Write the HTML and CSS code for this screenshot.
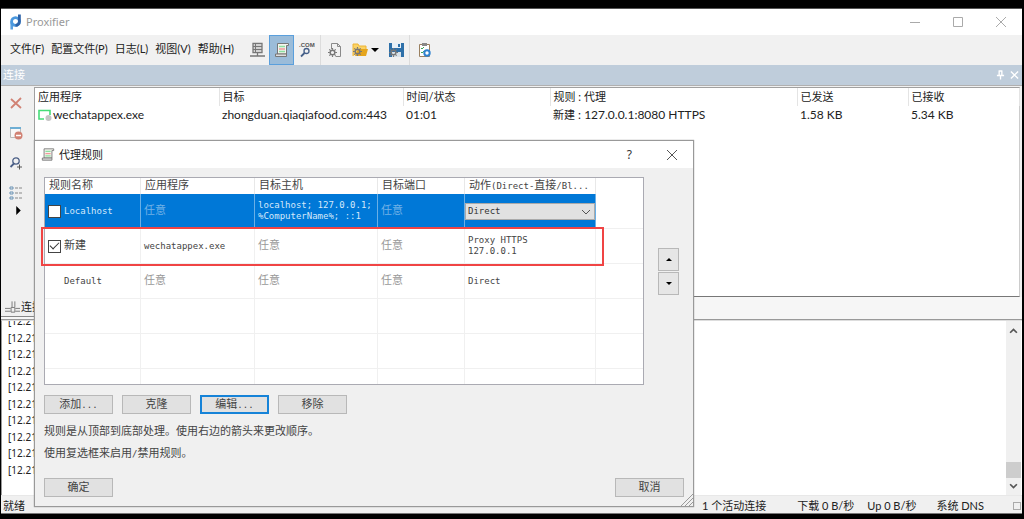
FILE: index.html
```
<!DOCTYPE html>
<html lang="zh-CN">
<head>
<meta charset="utf-8">
<title>Proxifier</title>
<link rel="stylesheet" href="styles.css">
</head>
<body>
<svg class="defs" aria-hidden="true">
  <symbol id="scroll" viewBox="0 0 16 16">
    <path d="M3.500 1.500H14.500V3.500H12.500V12H3.500Z" fill="#f4f4ee" stroke="#777"/>
    <path d="M1.500 12H12.500V14.500H1.500Z" fill="#ddd" stroke="#777"/>
    <path d="M5 4.500h6M5 9.500h6" stroke="#8ce0a0" stroke-width="1.500"/><path d="M5 7h6" stroke="#f09a9a" stroke-width="1.500"/>
  </symbol>
  <symbol id="gear" viewBox="0 0 10 10">
    <circle cx="5" cy="5" r="2.600" fill="none" stroke="#777" stroke-width="1.600"/>
    <path d="M5 0v2M5 8v2M0 5h2M8 5h2M1.500 1.500l1.400 1.400M7.100 7.100l1.400 1.400M8.500 1.500L7.100 2.900M1.500 8.500l1.400-1.400" stroke="#777" stroke-width="1.300"/>
  </symbol>
</svg>
<main class="app">
  <header class="titlebar">
    <svg class="logo" viewBox="0 0 12 16"><path d="M1.700 15.500V7.500" stroke="#5aa0e0" stroke-width="2.600"/><circle cx="5.500" cy="7.500" r="3.900" fill="none" stroke="#4a98de" stroke-width="2.800"/><path d="M5.500 11.400A3.900 3.900 0 0 0 9.400 7.500V.5" fill="none" stroke="#2c62a8" stroke-width="2.800"/></svg>
    <h1>Proxifier</h1>
    <div class="winbtns">
      <button aria-label="最小化"><svg viewBox="0 0 10 10"><path d="M0 5.500h10"/></svg></button>
      <button aria-label="最大化"><svg viewBox="0 0 10 10"><path d="M.5.5h9v9h-9z"/></svg></button>
      <button aria-label="关闭"><svg viewBox="0 0 10 10"><path d="M0 0l10 10M10 0L0 10"/></svg></button>
    </div>
  </header>
  <div class="toolbar">
    <nav class="menu">
      <button>文件(F)</button><button>配置文件(P)</button><button>日志(L)</button><button>视图(V)</button><button>帮助(H)</button>
    </nav>
    <div class="tools">
      <button aria-label="代理服务器"><svg viewBox="0 0 16 16"><path d="M4 1.500h9v9H4zM4 4.500h9M4 7.500h9M8.500 10.500v3M1 14h15M6 3h1M6 6h1M6 9h1" fill="none" stroke="#777" stroke-width="1.300"/></svg></button>
      <button class="on" aria-label="代理规则"><svg viewBox="0 0 16 16"><use href="#scroll"/></svg></button>
      <button aria-label="域名解析"><svg viewBox="0 0 16 16"><text x="0" y="5" class="com">.COM</text><circle cx="7.500" cy="9" r="2.500" fill="none" stroke="#456089" stroke-width="1.300"/><path d="M5.500 11L2 14.500" stroke="#456089" stroke-width="1.800"/></svg></button>
      <i class="sep"></i>
      <button aria-label="新建配置"><svg viewBox="0 0 16 16"><path d="M4.500 7V1.500h6l3 3v10h-5M10.500 1.500v3h3" fill="none" stroke="#8a8a8a"/><use href="#gear" x="1" y="6" width="9" height="9"/></svg></button>
      <button class="drop" aria-label="打开配置"><svg viewBox="0 0 16 16"><path d="M1 14V2h5l1 2h7v3" fill="#fbd264" stroke="#eeb435"/><path d="M3 14l3-7h10l-2 7z" fill="#e5a51d"/><use href="#gear" x="1" y="5" width="9" height="9"/></svg><svg class="tri" viewBox="0 0 8 4"><path d="M0 0h8L4 4z"/></svg></button>
      <button aria-label="保存配置"><svg viewBox="0 0 16 16"><path d="M1 1h15v14H1z" fill="#2e70a9"/><path d="M4 1h9v5H4z" fill="#e8f0f7"/><path d="M10 2h2v3h-2z" fill="#2e70a9"/><path d="M4 10h9v5H4z" fill="#d9e2e9"/><use href="#gear" x="1" y="6" width="9" height="9"/></svg></button>
      <i class="sep"></i>
      <button aria-label="检查"><svg viewBox="0 0 16 16"><path d="M3.500 2.500h10v12h-10z" fill="#fff" stroke="#9a8060"/><path d="M6 1h5v3H6z" fill="#888"/><path d="M5 6l1 1 2-2M5 10l1 1 2-2" fill="none" stroke="#3ba657"/><circle cx="11" cy="11" r="2.700" fill="#fff" stroke="#2f82cf" stroke-width="2"/></svg></button>
    </div>
  </div>
  <div class="panehead"><span>连接</span>
    <button aria-label="固定"><svg viewBox="0 0 10 10"><path d="M3.500 0v5.500M6.500 0v5.500M3 .5h4M1 5.500h8M5 5.500V10" fill="none"/></svg></button>
    <button aria-label="关闭"><svg viewBox="0 0 10 10"><path d="M1 1l8 8M9 1L1 9"/></svg></button>
  </div>
  <div class="workarea">
    <aside class="side">
      <button aria-label="断开"><svg viewBox="0 0 14 14"><path d="M2 3l10 9M12 2L2 12" stroke="#d18274" stroke-width="1.800"/></svg></button>
      <button aria-label="阻止"><svg viewBox="0 0 14 14"><path d="M1.500 1v10.500h10V1" fill="#f8f8f8" stroke="#bbb"/><path d="M1 2h11" stroke="#6eaed4" stroke-width="2"/><circle cx="9.500" cy="9.500" r="4" fill="#d18274"/><path d="M7 9.500h5" stroke="#fff" stroke-width="1.500"/></svg></button>
      <button aria-label="查找"><svg viewBox="0 0 14 14"><circle cx="7" cy="5" r="3.200" fill="none" stroke="#4b5f86" stroke-width="1.300"/><path d="M5 7.500L1.500 11" stroke="#4b5f86" stroke-width="1.800"/><path d="M10.500 8.500v5M8 11h5" stroke="#555"/></svg></button>
      <button aria-label="列表"><svg viewBox="0 0 14 14"><path d="M1 1h3v2H1zM1 6h3v2H1zM1 11h3v2H1z" fill="none" stroke="#6b93b5"/><path d="M6 2h3M10 2h3M6 7h3M10 7h3M6 12h3M10 12h3" stroke="#888"/></svg></button>
      <button class="more" aria-label="更多"><svg viewBox="0 0 4 8"><path d="M0 0l4 4-4 4z"/></svg></button>
    </aside>
    <div class="listbox">
      <table class="conns">
        <colgroup><col class="c1"><col class="c1"><col class="c3"><col class="c4"><col class="c5"><col class="c5"><col></colgroup>
        <thead><tr><th>应用程序</th><th>目标</th><th>时间/状态</th><th>规则 : 代理</th><th>已发送</th><th>已接收</th><th></th></tr></thead>
        <tbody><tr><td><svg class="appicon" viewBox="0 0 14 12"><path d="M6 10H1V1.500h11V6" fill="none" stroke="#46dd78" stroke-width="1.600"/><circle cx="10.500" cy="9" r="3" fill="#c5c5c5"/></svg>wechatappex.exe</td><td>zhongduan.qiaqiafood.com:443</td><td>01:01</td><td><span class="cn">新建</span> : 127.0.0.1:8080 HTTPS</td><td>1.58 KB</td><td>5.34 KB</td><td></td></tr></tbody>
      </table>
    </div>
  </div>
  <div class="tabs"><button><svg viewBox="0 0 16 12"><path d="M7.500 0v6M10.500 0v6M0 7.500h6M0 10.500h6M11 7.500h5M11 10.500h5M6.500 6.500h4v5h-4z" fill="none" stroke="#777"/></svg>连接</button></div>
  <div class="logwrap">
    <div class="log"><p>[12.21</p><p>[12.21</p><p>[12.21</p><p>[12.21</p><p>[12.21</p><p>[12.21</p><p>[12.21</p><p>[12.21</p><p>[12.21</p><p>[12.21</p></div>
    <div class="scroll">
      <svg viewBox="0 0 8 6"><path d="M1 5l3-3 3 3"/></svg>
      <i class="thumb"></i>
      <svg viewBox="0 0 8 6"><path d="M1 1l3 3 3-3"/></svg>
    </div>
  </div>
  <footer class="status"><span class="ready">就绪</span><span>1 个活动连接</span><span class="down">下载 0 B/秒</span><span>Up 0 B/秒</span><span class="dns">系统 DNS</span><i class="grip"></i></footer>
</main>

<section class="dialog" role="dialog" aria-labelledby="dlg">
  <header class="dlghead">
    <svg class="dlgicon" viewBox="0 0 16 16"><use href="#scroll"/></svg>
    <h2 id="dlg">代理规则</h2>
    <button class="help" aria-label="帮助">?</button>
    <button aria-label="关闭"><svg viewBox="0 0 10 10"><path d="M0 0l10 10M10 0L0 10"/></svg></button>
  </header>
  <div class="dlgbody">
    <div class="rulerow">
      <div class="rulebox">
        <table class="rules">
          <colgroup><col class="r1"><col class="r2"><col class="r3"><col class="r4"><col class="r5"><col></colgroup>
          <thead><tr><th>规则名称</th><th>应用程序</th><th>目标主机</th><th>目标端口</th><th>动作<span class="m">(Direct-</span>直接<span class="m">/Bl...</span></th><th></th></tr></thead>
          <tbody>
            <tr class="sel"><td><label><input type="checkbox"><span class="m">Localhost</span></label></td><td class="any">任意</td><td class="m">localhost; 127.0.0.1; %ComputerName%; ::1</td><td class="any">任意</td><td class="act"><div class="combo"><select class="m" aria-label="动作"><option>Direct</option></select><svg viewBox="0 0 8 6"><path d="M0 1l4 4 4-4"/></svg></div></td><td></td></tr>
            <tr><td><label><input type="checkbox" checked>新建</label></td><td class="m">wechatappex.exe</td><td class="any">任意</td><td class="any">任意</td><td class="m">Proxy HTTPS<br>127.0.0.1</td><td></td></tr>
            <tr><td class="m nobox">Default</td><td class="any">任意</td><td class="any">任意</td><td class="any">任意</td><td class="m">Direct</td><td></td></tr>
            <tr><td></td><td></td><td></td><td></td><td></td><td></td></tr>
            <tr><td></td><td></td><td></td><td></td><td></td><td></td></tr>
            <tr class="last"><td></td><td></td><td></td><td></td><td></td><td></td></tr>
          </tbody>
        </table>
        <div class="mark"></div>
      </div>
      <div class="order">
        <button aria-label="上移"><svg viewBox="0 0 6 3"><path d="M0 3l3-3 3 3z"/></svg></button>
        <button aria-label="下移"><svg viewBox="0 0 6 3"><path d="M0 0h6L3 3z"/></svg></button>
      </div>
    </div>
    <div class="actions"><button class="btn">添加<span class="m">...</span></button><button class="btn">克隆</button><button class="btn focus">编辑<span class="m">...</span></button><button class="btn">移除</button></div>
    <p class="note">规则是从顶部到底部处理。使用右边的箭头来更改顺序。</p>
    <p class="note">使用复选框来启用<span class="m">/</span>禁用规则。</p>
    <div class="confirm"><button class="btn">确定</button><button class="btn">取消</button></div>
  </div>
  <svg class="resize" viewBox="0 0 12 12"><path d="M0 12L12 0M4 12l8-8M8 12l4-4"/></svg>
</section>
</body>
</html>
```
FILE: styles.css
```
* { box-sizing: border-box; }
html { height: 100%; background: #000; }
body {
  height: 100%;
  margin: 0;
  padding: 8px 2px 5px 1px;
  position: relative;
  overflow: hidden;
  background: #000;
  color: #222;
  font: 11px/16px Lato, "Noto Sans CJK SC", sans-serif;
}
.defs { position: absolute; width: 0; height: 0; }
svg { display: block; flex: none; }
button { margin: 0; padding: 0; border: 0; background: none; color: inherit; font: inherit; white-space: nowrap; }
h1, h2, p { margin: 0; font-size: inherit; font-weight: 400; }

.app { height: 100%; display: flex; flex-direction: column; background: #f0f0f0; }
.titlebar { flex: none; height: 27px; display: flex; align-items: center; padding-left: 9px; background: #fff; border-top: 1px solid #555; }
.logo { width: 12px; height: 16px; }
.titlebar h1 { margin-left: 4px; color: #999; font-size: 11px; font-family: "Noto Sans", sans-serif; }
.winbtns { margin-left: auto; display: flex; }
.winbtns button { width: 43px; height: 24px; display: grid; place-items: center; }
.winbtns svg { width: 10px; height: 10px; fill: none; stroke: #aaa; }

.toolbar { flex: none; height: 30px; display: flex; align-items: center; padding-left: 9px; background: #f1f1f1; }
.menu { flex: none; width: 224px; display: flex; justify-content: space-between; padding-bottom: 2px; }
.tools { display: flex; align-items: center; margin-left: 10px; }
.tools button { width: 25px; height: 30px; display: grid; place-items: center; }
.tools svg { width: 16px; height: 16px; }
.tools .on { background: #9bbcd9; border: 1px solid #5a9fdc; }
.tools .drop { width: 36px; display: flex; align-items: center; justify-content: center; gap: 3px; }
.tools .tri { width: 8px; height: 4px; }
.sep { width: 1px; height: 30px; margin: 0 1px; background: #dcdcdc; }
.com { font: bold 6px "Liberation Sans", sans-serif; fill: #555; }

.panehead { flex: none; height: 21px; display: flex; align-items: center; gap: 5px; padding: 0 3px 1px 2px; background: #bfcddb; border-bottom: 1px solid #b0b0b0; color: #fff; }
.panehead span { flex: 1; }
.panehead svg { width: 9px; height: 10px; stroke: #fff; stroke-width: 1.500; }

.workarea { flex: 210 1 0; min-height: 0; display: flex; padding-top: 1px; }
.side { flex: none; width: 33px; display: flex; flex-direction: column; gap: 16px; padding: 9px 0 0 8px; }
.side button { width: 14px; }
.side svg { width: 14px; height: 14px; }
.side .more { display: grid; place-items: center; margin-top: -10px; width: 18px; }
.side .more svg { width: 5px; height: 9px; }
.listbox { flex: 1; min-width: 0; margin-right: 2px; background: #fff; border: 1px solid #a0a0a0; border-right-color: #ccc; border-bottom-color: #777; }
.conns { width: 100%; table-layout: fixed; border-collapse: collapse; white-space: nowrap; }
.conns th, .conns td { padding: 0 3px; text-align: left; font-weight: 400; }
.conns th { height: 18px; border-right: 1px solid #e4e4e4; }
.conns td { height: 18px; font-size: 12px; }
.cn { font-size: 11px; }
.c1 { width: 184px; }
.c3 { width: 147px; }
.c4 { width: 247px; }
.c5 { width: 111px; }
.conns col:last-child { width: auto; }
.appicon { display: inline-block; width: 14px; height: 12px; margin-right: 1px; vertical-align: -2px; }

.tabs { flex: none; height: 23px; display: flex; border-bottom: 1px solid #999; background: #f6f6f6; }
.tabs button { display: flex; align-items: center; gap: 1px; padding: 0 8px 0 4px; border-bottom: 1px solid #888; margin-bottom: 2px; background: #f0f0f0; }
.tabs svg { width: 15px; height: 12px; }
.logwrap { flex: 174 1 0; min-height: 0; display: flex; border-left: 1px solid #999; background: #fff; border-top: 1px solid #ddd; }
.log { flex: 1; overflow: hidden; display: flex; flex-direction: column; justify-content: space-between; padding: 0 6px 17px; font-size: 10px; font-family: "Noto Sans", sans-serif; }
.log p { line-height: 16px; }
.log p:first-child { margin-top: -8px; }
.scroll { width: 15px; margin-right: 1px; display: flex; flex-direction: column; align-items: center; padding: 6px 0 5px; background: #f0f0f0; }
.scroll svg { width: 9px; height: 7px; fill: none; stroke: #555; stroke-width: 1.500; }
.thumb { width: 15px; height: 16px; margin: auto 0 5px; background: #cdcdcd; }
.status { flex: none; height: 19px; display: flex; align-items: center; padding: 2px 0 0 2px; border-bottom: 1px solid #777; border-top: 1px solid #e8e8e8; background: #f0f0f0; }
.ready { flex: 1; }
.down { margin: 0 13px 0 31px; }
.dns { margin: 0 29px 0 20px; }
.grip { width: 8px; height: 8px; border: 1px solid #aaa; margin-right: 1px; }

.dialog { position: absolute; left: 34px; top: 140px; width: 660px; border: 1px solid #999; background: #f0f0f0; color: #444; box-shadow: 0 0 1px #888; }
.dlghead { height: 27px; display: flex; align-items: center; padding: 0 16px 0 6px; background: #fff; }
.dlgicon { width: 14px; height: 15px; }
.dlghead h2 { flex: 1; margin-left: 4px; color: #222; }
.dlghead svg:not(.dlgicon) { width: 10px; height: 10px; fill: none; stroke: #555; }
.help { margin-right: 35px; font-family: "Noto Sans", sans-serif; font-size: 12px; color: #333; }
.dlgbody { padding: 9px 9px 9px 9px; font-family: "Liberation Mono", "Noto Sans CJK SC", monospace; }
.m { font-family: "DejaVu Sans Mono", monospace; font-size: 9px; }

.rulerow { display: flex; gap: 14px; }
.rulebox { flex: none; position: relative; width: 600px; border: 1px solid #aaaab2; background: #fff; }
.rules { width: 100%; table-layout: fixed; border-collapse: separate; border-spacing: 0; }
.r1 { width: 96px; }
.r2 { width: 114px; }
.r3 { width: 123px; }
.r4 { width: 87px; }
.r5 { width: 131px; }
.rules th { height: 16px; padding: 0 0 0 4px; text-align: left; font-weight: 400; line-height: 15px; white-space: nowrap; border-right: 1px solid #e8e8e8; }
.rules td { height: 35px; padding: 0 0 0 3px; line-height: 11px; border-right: 1px solid #f0f0f0; border-bottom: 1px solid #f0f0f0; }
.rules th:last-child, .rules td:last-child { border-right: 0; }
.rules .last td { height: 15px; border-bottom: 0; }
.rules td.any { color: #999; }
.sel td:not(:last-child) { background: #0078d7; color: #d5e8fa; border-right-color: #6aafe6; border-bottom-color: #0078d7; }
.rules .sel td.any { color: #72b1e6; }
.rules td.nobox { padding-left: 19px; }
.rules label { display: flex; align-items: center; gap: 3px; }
.rules input { appearance: none; flex: none; width: 13px; height: 13px; margin: 0; border: 1px solid #444; background: #fff; display: grid; place-items: center; }
.rules input:checked::before { content: ""; width: 8px; height: 4px; margin-bottom: 3px; border: solid #333; border-width: 0 0 1px 1px; transform: rotate(-45deg); }
.rules td.act { padding: 0; }
.combo { position: relative; height: 17px; border: 1px solid #aaa; background: #e1e1e1; }
.combo select { appearance: none; display: block; width: 100%; height: 15px; padding: 0 2px; border: 0; background: transparent; color: #333; }
.combo svg { position: absolute; right: 4px; top: 5px; width: 8px; height: 6px; fill: none; stroke: #555; }
.mark { position: absolute; left: -4px; top: 49px; width: 563px; height: 39px; border: 2px solid #f04444; pointer-events: none; }
.order { display: flex; flex-direction: column; gap: 1px; padding-top: 71px; }
.order button { width: 21px; height: 23px; display: grid; place-items: center; border: 1px solid #b8b8b8; background: #e6e6e6; }
.order svg { width: 6px; height: 3px; }

.actions { display: flex; gap: 9px; margin: 10px 0; }
.btn { width: 69px; height: 19px; border: 1px solid #b8b8b8; background: #e1e1e1; line-height: 16px; }
.focus { border: 2px solid #1683d8; line-height: 14px; }
.note { line-height: 16px; margin-bottom: 6px; }
.confirm { display: flex; justify-content: space-between; margin-top: 16px; }
.resize { position: absolute; right: 0; bottom: 0; width: 12px; height: 12px; fill: none; stroke: #999; }
```
